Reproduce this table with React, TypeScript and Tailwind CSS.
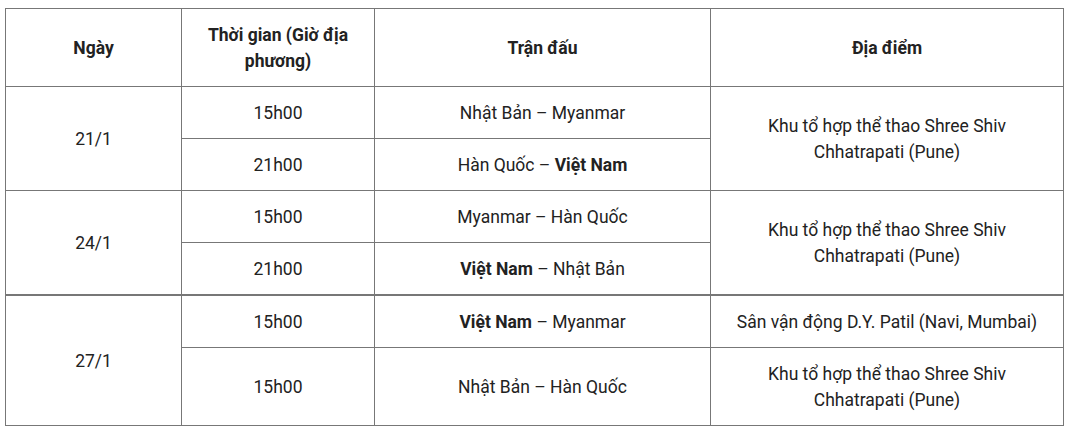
const rows = [
  {
    date: "21/1",
    place: "Khu tổ hợp thể thao Shree Shiv Chhatrapati (Pune)",
    matches: [
      { time: "15h00", match: <>Nhật Bản – Myanmar</> },
      { time: "21h00", match: <>Hàn Quốc – <b>Việt Nam</b></> },
    ],
  },
  {
    date: "24/1",
    place: "Khu tổ hợp thể thao Shree Shiv Chhatrapati (Pune)",
    matches: [
      { time: "15h00", match: <>Myanmar – Hàn Quốc</> },
      { time: "21h00", match: <><b>Việt Nam</b> – Nhật Bản</> },
    ],
  },
];

const cell = "border border-[#777] px-5 py-[12.5px] text-center align-middle";
const head = "border border-[#777] px-5 py-[12.5px] text-center align-middle font-bold";

export default function App() {
  return (
    <div className="bg-white w-[1066px] h-[430px] pt-[8px] pl-[5px] text-[17.5px] leading-[26px] text-[#222]" style={{ fontFamily: "Roboto, 'Noto Sans', sans-serif" }}>
      <table className="border-collapse w-[1058px] table-fixed">
        <colgroup>
          <col className="w-[176px]" />
          <col className="w-[193px]" />
          <col className="w-[336px]" />
          <col className="w-[353px]" />
        </colgroup>
        <thead>
          <tr>
            <th className={head}>Ngày</th>
            <th className={head}>Thời gian (Giờ địa phương)</th>
            <th className={head}>Trận đấu</th>
            <th className={head}>Địa điểm</th>
          </tr>
        </thead>
        <tbody>
          {rows.map((r, gi) =>
            r.matches.map((m, i) => (
              <tr key={`${gi}-${i}`}>
                {i === 0 && (
                  <td rowSpan={2} className={`${cell} ${gi === 1 ? "border-b-2" : ""}`}>{r.date}</td>
                )}
                <td className={`${cell} ${gi === 1 && i === 1 ? "border-b-2" : ""}`}>{m.time}</td>
                <td className={`${cell} ${gi === 1 && i === 1 ? "border-b-2" : ""}`}>{m.match}</td>
                {i === 0 && (
                  <td rowSpan={2} className={`${cell} ${gi === 1 ? "border-b-2" : ""}`}>{r.place}</td>
                )}
              </tr>
            ))
          )}
          <tr>
            <td rowSpan={2} className={cell}>27/1</td>
            <td className={cell}>15h00</td>
            <td className={cell}><b>Việt Nam</b> – Myanmar</td>
            <td className={cell}>Sân vận động D.Y. Patil (Navi, Mumbai)</td>
          </tr>
          <tr>
            <td className={cell}>15h00</td>
            <td className={cell}>Nhật Bản – Hàn Quốc</td>
            <td className={cell}>Khu tổ hợp thể thao Shree Shiv Chhatrapati (Pune)</td>
          </tr>
        </tbody>
      </table>
    </div>
  );
}
